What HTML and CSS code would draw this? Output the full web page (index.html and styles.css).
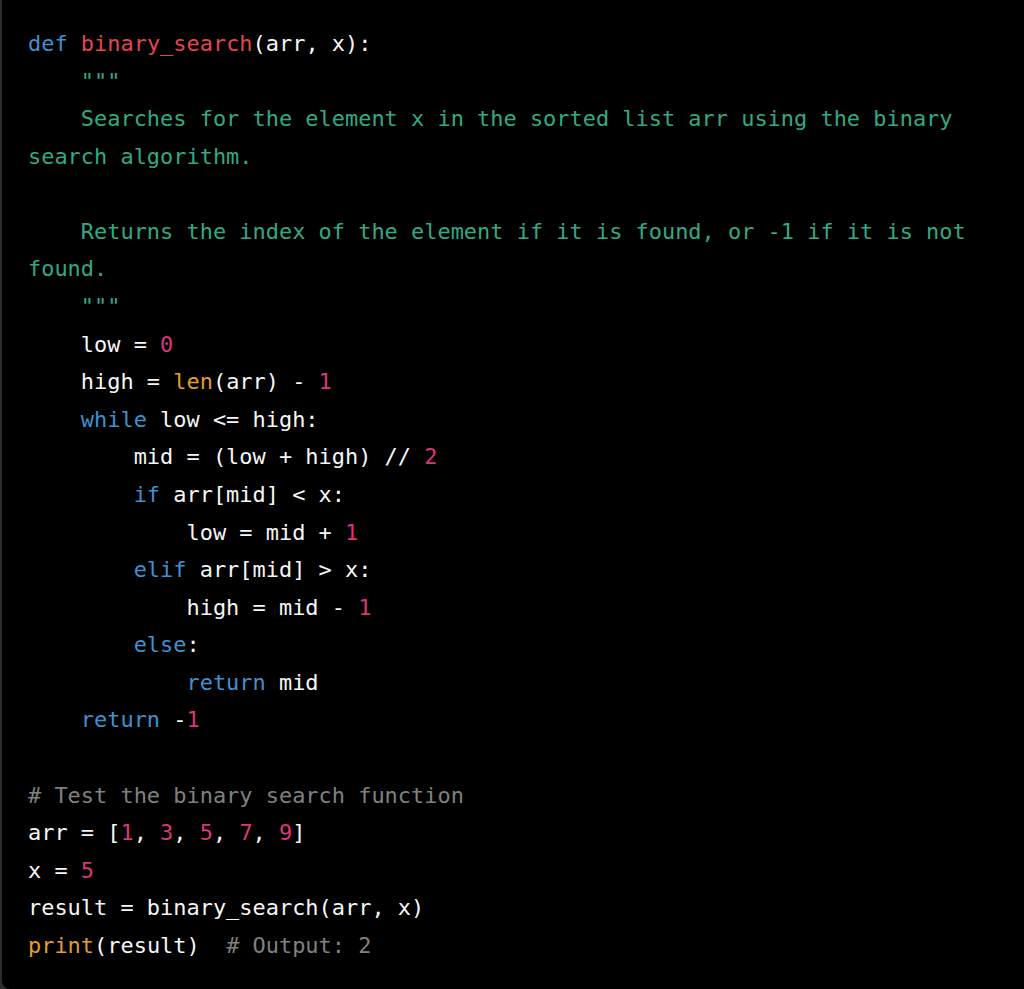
FILE: index.html
```html
<!DOCTYPE html>
<html>
<head>
<meta charset="utf-8">
<link rel="stylesheet" href="styles.css">
</head>
<body>
<div class="frame">
  <div class="code">
    <div class="ln"><span class="kw">def</span> <span class="fn">binary_search</span><span>(arr, x):</span></div>
    <div class="ln"><span class="str">    """</span></div>
    <div class="ln"><span class="str">    Searches for the element x in the sorted list arr using the binary</span></div>
    <div class="ln"><span class="str">search algorithm.</span></div>
    <div class="ln"></div>
    <div class="ln"><span class="str">    Returns the index of the element if it is found, or -1 if it is not</span></div>
    <div class="ln"><span class="str">found.</span></div>
    <div class="ln"><span class="str">    """</span></div>
    <div class="ln"><span>    low = </span><span class="num">0</span></div>
    <div class="ln"><span>    high = </span><span class="bi">len</span><span>(arr) - </span><span class="num">1</span></div>
    <div class="ln"><span class="kw">    while</span><span> low &lt;= high:</span></div>
    <div class="ln"><span>        mid = (low + high) // </span><span class="num">2</span></div>
    <div class="ln"><span class="kw">        if</span><span> arr[mid] &lt; x:</span></div>
    <div class="ln"><span>            low = mid + </span><span class="num">1</span></div>
    <div class="ln"><span class="kw">        elif</span><span> arr[mid] &gt; x:</span></div>
    <div class="ln"><span>            high = mid - </span><span class="num">1</span></div>
    <div class="ln"><span class="kw">        else</span><span>:</span></div>
    <div class="ln"><span class="kw">            return</span><span> mid</span></div>
    <div class="ln"><span class="kw">    return</span><span> -</span><span class="num">1</span></div>
    <div class="ln"></div>
    <div class="ln"><span class="cm"># Test the binary search function</span></div>
    <div class="ln"><span>arr = [</span><span class="num">1</span><span>, </span><span class="num">3</span><span>, </span><span class="num">5</span><span>, </span><span class="num">7</span><span>, </span><span class="num">9</span><span>]</span></div>
    <div class="ln"><span>x = </span><span class="num">5</span></div>
    <div class="ln"><span>result = binary_search(arr, x)</span></div>
    <div class="ln"><span class="bi">print</span><span>(result)  </span><span class="cm"># Output: 2</span></div>
  </div>
</div>
</body>
</html>
```
FILE: styles.css
```css
html, body {
  margin: 0;
  padding: 0;
  height: 100%;
}
body {
  background: #2c2c2e;
  overflow: hidden;
}
.frame {
  margin-left: 2px;
  height: 989px;
  background: #000;
  border-bottom-left-radius: 8px;
  overflow: hidden;
}
.code {
  display: flex;
  flex-direction: column;
  padding: 25px 0 0 26px;
  font-family: "DejaVu Sans Mono", "Liberation Mono", monospace;
  font-size: 21.95px;
  line-height: 37.58px;
  color: #f6f6f6;
}
.ln {
  height: 37.58px;
  white-space: pre;
}
.kw { color: #4090cf; }
.fn { color: #e2474f; }
.str { color: #34a884; }
.num { color: #d93778; }
.bi { color: #e49c2f; }
.cm { color: #808080; }
```
